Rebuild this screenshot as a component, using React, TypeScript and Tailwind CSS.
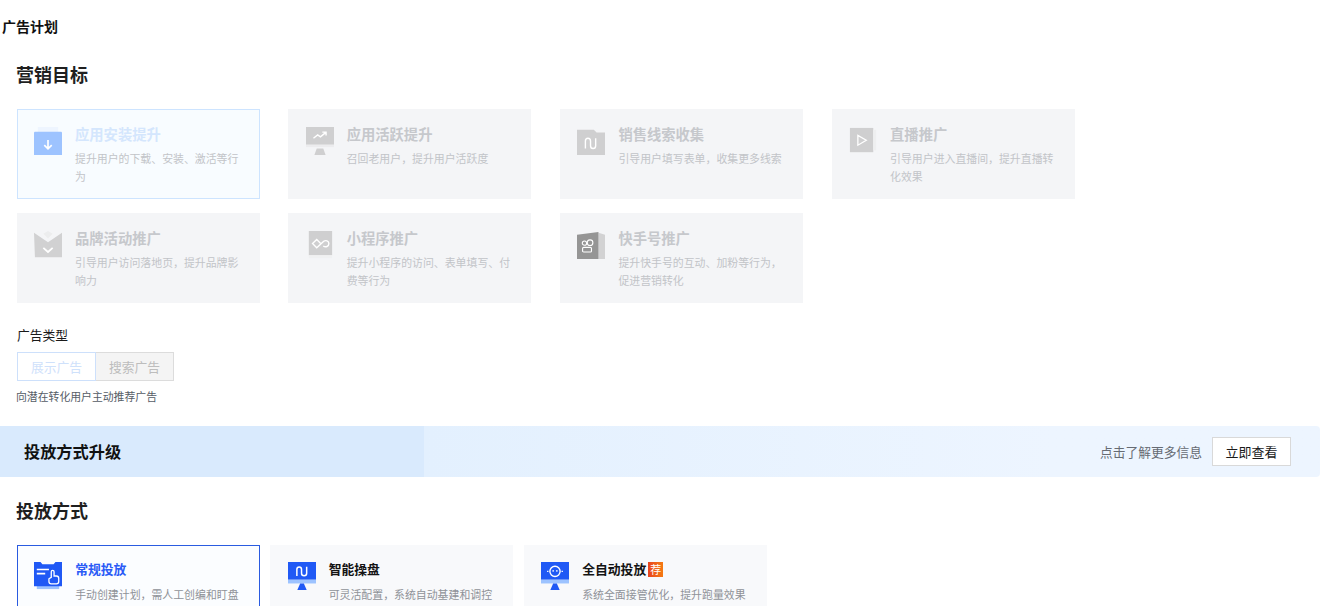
import React from "react";

const FONT = { fontFamily: '"Noto Sans CJK SC", "Liberation Sans", sans-serif' };

function Install() {
  return (
    <svg width="28" height="28" viewBox="0 0 30 30">
      <path d="M4 0h22v6H4z" fill="#eef5ff" />
      <path d="M0 6.500C0 5.500.5 5 1.500 5 8 5 22 5 28.500 5c1 0 1.500.5 1.500 1.500V30H0z" fill="#9dc3ff" />
      <path d="M15 14v9M11 19.500l4 4 4-4" stroke="#fff" strokeWidth="1.800" fill="none" />
    </svg>
  );
}

function Active() {
  return (
    <svg width="28" height="28" viewBox="0 0 30 30">
      <path d="M0 0h30v19H0z" fill="#cfcfd0" />
      <path d="M0 19h30v2.500H0z" fill="#ececee" />
      <path d="M9 30l2.500-7h7L21 30z" fill="#cfcfd0" />
      <path d="M8 12l4.500-3.500 3 2L21 6M17.500 5.500H21.500V9" stroke="#fff" strokeWidth="1.500" fill="none" />
    </svg>
  );
}

function Leads() {
  return (
    <svg width="28" height="28" viewBox="0 0 30 30">
      <path d="M0 3h18l3 3h9v24H0z" fill="#cfcfd0" />
      <path d="M9 23v-8c0-4 5.500-4 5.500 0v5c0 4 5.500 4 5.500 0v-8" stroke="#fff" strokeWidth="1.500" fill="none" />
    </svg>
  );
}

function Live() {
  return (
    <svg width="28" height="28" viewBox="0 0 30 30">
      <path d="M1 1h25v26H1z" fill="#cfcfd0" />
      <path d="M26 3h3v22h-3z" fill="#eeeff0" />
      <path d="M9.500 9v10.500l9-5.250z" stroke="#fff" strokeWidth="1.400" fill="none" />
    </svg>
  );
}

function Brand() {
  return (
    <svg width="28" height="28" viewBox="0 0 30 30">
      <path d="M10 3l5-3 5 3-5 5z" fill="#ecedee" />
      <path d="M0 2l15 10L30 2v26H1z" fill="#d1d1d2" />
      <path d="M10 18l5 4.500 5-4.500" stroke="#fff" strokeWidth="1.900" fill="none" />
    </svg>
  );
}

function Mini() {
  return (
    <svg width="28" height="28" viewBox="0 0 30 30">
      <path d="M3 0h25v26H3z" fill="#cfcfd0" />
      <path d="M3 26h25v3H3z" fill="#f0f1f2" />
      <path d="M15.500 13l-4-4-4.500 4.500 4.500 4.500 7.500-7c2-1.500 5.500-.5 5.500 2.500s-3.500 4.500-6 2.500" stroke="#fff" strokeWidth="1.500" fill="none" />
    </svg>
  );
}

function Kuaishou() {
  return (
    <svg width="28" height="28" viewBox="0 0 30 30">
      <path d="M23 2l7 2v26h-7z" fill="#d2d2d3" />
      <path d="M0 4l23-3v30H0z" fill="#959595" />
      <circle cx="8" cy="13" r="2.300" stroke="#fff" strokeWidth="1.200" fill="none" />
      <circle cx="14" cy="12.500" r="3" stroke="#fff" strokeWidth="1.200" fill="none" />
      <rect x="6" y="17.500" width="9.500" height="5" rx="1.200" stroke="#fff" strokeWidth="1.200" fill="none" />
    </svg>
  );
}

function Manual() {
  return (
    <svg width="28" height="28" viewBox="0 0 30 30">
      <path d="M3 25h24v4H3z" fill="#9dc3ff" />
      <path d="M0 0h7l2 2.500h12L23 0h7v26H0z" fill="#2059f5" />
      <path d="M3 8h13M3 12.500h9" stroke="#fff" strokeWidth="1.800" />
      <path d="M18.500 10.500c0-2 3-2 3 0v4.500h2.500c1.500 0 2.500 1 2.500 2.500v3.500c0 1.500-1 2.500-2.500 2.500h-5.500c-1.500 0-2.500-1-2.500-2.500v-3l2.500-1.500z" fill="#2059f5" stroke="#fff" strokeWidth="1.400" />
    </svg>
  );
}

function Smart() {
  return (
    <svg width="28" height="28" viewBox="0 0 30 30">
      <path d="M0 0h30v19H0z" fill="#2059f5" />
      <path d="M0 19h30v4H0z" fill="#9dc3ff" />
      <path d="M10 30l3-7h4l3 7z" fill="#2059f5" />
      <path d="M9.500 15V8c0-3.500 5-3.500 5 0v4c0 3.500 5.500 3.500 5.500 0V5" stroke="#fff" strokeWidth="1.600" fill="none" />
    </svg>
  );
}

function Auto() {
  return (
    <svg width="28" height="28" viewBox="0 0 30 30">
      <path d="M0 0h30v19H0z" fill="#2059f5" />
      <path d="M0 19h30v4H0z" fill="#9dc3ff" />
      <path d="M10 30l3-7h4l3 7z" fill="#2059f5" />
      <circle cx="15" cy="10" r="5.500" stroke="#fff" strokeWidth="1.500" fill="none" />
      <path d="M13 8.500v2M17 8.500v2M6.500 10H8M22 10h1.500" stroke="#fff" strokeWidth="1.300" />
    </svg>
  );
}

function GoalCard({ icon, title, desc, selected }: { icon: React.ReactNode; title: string; desc: string; selected?: boolean }) {
  return (
    <div className={`h-[90px] flex gap-[13px] pl-[16.500px] pr-[17px] pt-[15px] border ${selected ? "bg-[#f8fcff] border-[#cde4ff]" : "bg-[#f4f5f7] border-[#f4f5f7]"}`}>
      <div className="w-[28px] shrink-0 pt-[2px]">{icon}</div>
      <div className="min-w-0">
        <div className={`text-[14.300px] leading-[18px] font-bold ${selected ? "text-[#d4e6fd]" : "text-[#c6c8cc]"}`}>{title}</div>
        <div className="text-[10.900px] leading-[18px] mt-[6px] text-[#c2c4c8]">{desc}</div>
      </div>
    </div>
  );
}

function ModeCard({ icon, title, desc, selected, badge }: { icon: React.ReactNode; title: string; desc: string; selected?: boolean; badge?: boolean }) {
  return (
    <div className={`h-[90px] flex gap-[13px] pl-[16.500px] pr-[10px] pt-[14px] border ${selected ? "bg-[#fbfdff] border-[#2a5be0]" : "bg-[#f8f9fb] border-[#f8f9fb]"}`}>
      <div className="w-[28px] shrink-0 pt-[2px]">{icon}</div>
      <div className="min-w-0">
        <div className={`flex items-center gap-[2px] text-[12.800px] leading-[18px] font-bold ${selected ? "text-[#2a5bf6]" : "text-[#141414]"}`}>
          {title}
          {badge && <span className="w-[15px] h-[15px] flex items-center justify-center text-[11px] font-normal text-white bg-gradient-to-r from-[#e8431f] to-[#f57a10]">荐</span>}
        </div>
        <div className="text-[10.900px] leading-[18px] mt-[7px] text-[#8f9298] whitespace-nowrap">{desc}</div>
      </div>
    </div>
  );
}

export default function App() {
  return (
    <div style={FONT} className="w-[1324px] h-[606px] overflow-hidden bg-white text-[#141414]">
      <div className="pl-[2px] pt-[18px] text-[14px] leading-[17px] font-bold text-[#111]">广告计划</div>

      <div className="pl-[16px] pt-[27px] text-[18px] leading-[24px] font-bold text-[#1f1f1f]">营销目标</div>

      {/* marketing goals */}
      <div className="ml-[16.500px] mt-[23px] grid grid-cols-[repeat(4,243.200px)] gap-x-[28.500px] gap-y-[14px]">
        <GoalCard selected icon={<Install />} title="应用安装提升" desc="提升用户的下载、安装、激活等行为" />
        <GoalCard icon={<Active />} title="应用活跃提升" desc="召回老用户，提升用户活跃度" />
        <GoalCard icon={<Leads />} title="销售线索收集" desc="引导用户填写表单，收集更多线索" />
        <GoalCard icon={<Live />} title="直播推广" desc="引导用户进入直播间，提升直播转化效果" />
        <GoalCard icon={<Brand />} title="品牌活动推广" desc="引导用户访问落地页，提升品牌影响力" />
        <GoalCard icon={<Mini />} title="小程序推广" desc="提升小程序的访问、表单填写、付费等行为" />
        <GoalCard icon={<Kuaishou />} title="快手号推广" desc="提升快手号的互动、加粉等行为，促进营销转化" />
      </div>

      <div className="pl-[17px] mt-[23px] text-[12.750px] leading-[18px] text-[#1a1a1a]">广告类型</div>
      <div className="ml-[17px] mt-[8px] flex w-fit text-[12.750px]">
        <div className="w-[79px] h-[29px] flex items-center justify-center bg-white border border-[#cde0fb] text-[#cfe1fb]">展示广告</div>
        <div className="w-[78px] h-[29px] flex items-center justify-center bg-[#f4f4f4] border border-[#dcdcdc] border-l-0 text-[#bdbdbd]">搜索广告</div>
      </div>
      <div className="pl-[16px] mt-[7px] text-[10.850px] leading-[16px] text-[#555c66]">向潜在转化用户主动推荐广告</div>

      {/* upgrade banner */}
      <div className="mt-[22px] w-[1320px] h-[51px] flex rounded-r-[4px] overflow-hidden">
        <div className="w-[424px] shrink-0 bg-[#d9eafd] flex items-center pl-[24px] pb-[1px] text-[16.200px] font-bold text-[#111]">投放方式升级</div>
        <div className="flex-1 bg-gradient-to-r from-[#e3f0fe] to-[#edf5ff] to-70% flex items-center justify-end pr-[29px]">
          <span className="text-[12.750px] text-[#666b73]">点击了解更多信息</span>
          <button className="ml-[10px] w-[79px] h-[29px] bg-white border border-[#d9d9d9] text-[13px] text-[#1a1a1a]">立即查看</button>
        </div>
      </div>

      <div className="pl-[16px] pt-[21px] text-[18px] leading-[24px] font-bold text-[#1f1f1f]">投放方式</div>

      {/* delivery mode */}
      <div className="ml-[16.700px] mt-[23px] flex gap-[10.500px]">
        <div className="w-[243px]">
          <ModeCard selected icon={<Manual />} title="常规投放" desc="手动创建计划，需人工创编和盯盘" />
        </div>
        <div className="w-[243px]">
          <ModeCard icon={<Smart />} title="智能操盘" desc="可灵活配置，系统自动基建和调控" />
        </div>
        <div className="w-[243px]">
          <ModeCard badge icon={<Auto />} title="全自动投放" desc="系统全面接管优化，提升跑量效果" />
        </div>
      </div>
    </div>
  );
}
